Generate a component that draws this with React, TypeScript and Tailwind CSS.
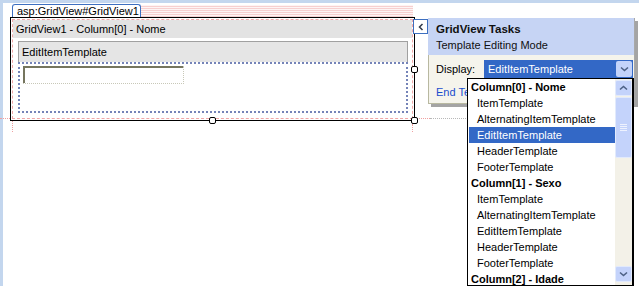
const rows = [
  { t: "Column[0] - Nome", h: true },
  { t: "ItemTemplate" },
  { t: "AlternatingItemTemplate" },
  { t: "EditItemTemplate", sel: true },
  { t: "HeaderTemplate" },
  { t: "FooterTemplate" },
  { t: "Column[1] - Sexo", h: true },
  { t: "ItemTemplate" },
  { t: "AlternatingItemTemplate" },
  { t: "EditItemTemplate" },
  { t: "HeaderTemplate" },
  { t: "FooterTemplate" },
  { t: "Column[2] - Idade", h: true },
];

function Handle({ className }: { className: string }) {
  return <div className={"absolute w-[7px] h-[7px] bg-white border border-black rounded-[2px] " + className} />;
}

function Chevron({ up }: { up?: boolean }) {
  return (
    <svg width="9" height="6" viewBox="0 0 9 6" className={up ? "rotate-180" : ""}>
      <path d="M1 1.5 L4.5 4.5 L8 1.5" fill="none" stroke="#4d6185" strokeWidth="1.6" />
    </svg>
  );
}

export default function App() {
  return (
    <div className="relative w-[639px] h-[286px] overflow-hidden bg-white shadow-[inset_3px_3px_0_#c3d6ee] font-['Liberation_Sans',Arial,sans-serif] text-[11px] text-black">
      <div className="flex items-start pl-[10px] pt-[4px]">
        {/* grid view design surface */}
        <div className="w-[405px] flex flex-col">
          <div className="flex h-[13px]">
            <div className="ml-[2px] w-[129px] h-[13px] border border-b-0 border-[#3d6fc0] rounded-t-[3px] bg-white pl-[4px] leading-[12px] whitespace-nowrap">
              asp:GridView#GridView1
            </div>
            <div className="w-[272px] mt-[1px] bg-[repeating-linear-gradient(0deg,#f7cfcf_0_1px,#fdf4f4_1px_2px)]" />
          </div>
          <div className="h-[104px] border border-black p-[1px]">
            <div className="h-full border border-dashed border-[#f0a8a8] flex flex-col">
              <div className="h-[18px] bg-[#e3e3e3] pl-[3px] leading-[18px] whitespace-nowrap">GridView1 - Column[0] - Nome</div>
              <div className="ml-[5px] mr-[4px] mt-[3px] flex flex-col">
                <div className="h-[21px] border border-b-0 border-[#a0a0a0] bg-[#e5e5e5] pl-[3px] leading-[20px]">EditItemTemplate</div>
                <div className="h-[51px] border-2 border-dotted border-[#7584b8] pt-[2px] pl-[3px]">
                  <div className="w-[161px] h-[18px] shadow-[inset_2px_2px_0_#75755e] border-r border-b border-dotted border-[#c8c8b8]" />
                </div>
              </div>
            </div>
          </div>
        </div>

        {/* smart tag */}
        <div className="ml-[-2px] mt-[15px] w-[15px] h-[15px] bg-white border border-[#3d6fc0] flex items-center justify-center">
          <svg width="6" height="8" viewBox="0 0 6 8">
            <path d="M4.5 1 L1.5 4 L4.5 7" fill="none" stroke="#303848" strokeWidth="1.5" />
          </svg>
        </div>
        <div className="mt-[14px] w-[207px] h-[86px] flex flex-col shadow-[3px_3px_0_#a4a4a4] border-r border-[#a8a8a8]">
          <div className="h-[37px] bg-[#c6d4f4] pl-[8px] pt-[4px]">
            <div className="font-bold text-[11.5px] leading-[14px] text-[#101010]">GridView Tasks</div>
            <div className="leading-[14px] mt-[2px] text-[#101010]">Template Editing Mode</div>
          </div>
          <div className="flex-1 bg-[#f5f4ec] border-l border-b border-[#b8b8a0] pl-[7px] pt-[5px]">
            <div className="flex items-center h-[18px]">
              <span className="w-[48px]">Display:</span>
              <div className="w-[149px] h-[18px] bg-[#3368c6] flex items-center">
                <span className="flex-1 pl-[4px] text-white leading-[16px]">EditItemTemplate</span>
                <div className="w-[16px] h-[16px] mr-[1px] bg-[#c3d3fa] rounded-[2px] flex items-center justify-center">
                  <Chevron />
                </div>
              </div>
            </div>
            <div className="mt-[7px] w-[31px] overflow-hidden leading-[14px] text-[#1a4ccc] whitespace-nowrap">End Template Editing</div>
          </div>
        </div>
      </div>

      {/* guide lines */}
      <div className="absolute left-0 top-[118px] w-[10px] border-t border-dotted border-[#f0a0a0]" />
      <div className="absolute left-[416px] top-[118px] w-[14px] border-t border-dotted border-[#f0a0a0]" />
      <div className="absolute left-[430px] top-[118px] w-[36px] border-t border-dotted border-[#b8b8b8]" />
      <div className="absolute left-[12px] top-[121px] h-[11px] border-l border-dotted border-[#f0a0a0]" />
      <div className="absolute left-[412px] top-[124px] h-[8px] border-l border-dotted border-[#f0a0a0]" />

      <Handle className="left-[411px] top-[66px]" />
      <Handle className="left-[209px] top-[117px]" />
      <Handle className="left-[411px] top-[117px]" />

      {/* dropdown list */}
      <div className="absolute left-[467px] top-[78px] w-[167px] h-[208px] bg-white border border-black border-r-2 flex">
        <div className="flex-1 pl-[1px] flex flex-col">
          {rows.map((r, i) => (
            <div
              key={i}
              className={
                "h-[16px] shrink-0 leading-[16px] whitespace-nowrap " +
                (r.h ? "pl-[2px] font-bold" : "pl-[8px]") +
                (r.sel ? " bg-[#3368c6] text-white" : "")
              }
            >
              {r.t}
            </div>
          ))}
        </div>
        <div className="w-[17px] pt-[1px] pb-[3px] bg-[#f3f1e8] flex flex-col">
          <div className="h-[16px] bg-[#c4d3fb] border border-[#e2eafc] rounded-[2px] flex items-center justify-center">
            <Chevron up />
          </div>
          <div className="mt-[1px] h-[61px] bg-[#c4d3fb] border border-[#e2eafc] rounded-[2px] flex flex-col items-center justify-center gap-[1px]">
            <div className="w-[7px] border-t border-[#eef2fe]" />
            <div className="w-[7px] border-t border-[#eef2fe]" />
            <div className="w-[7px] border-t border-[#eef2fe]" />
            <div className="w-[7px] border-t border-[#eef2fe]" />
          </div>
          <div className="flex-1" />
          <div className="h-[16px] bg-[#c4d3fb] border border-[#e2eafc] rounded-[2px] flex items-center justify-center">
            <Chevron />
          </div>
        </div>
      </div>
    </div>
  );
}
